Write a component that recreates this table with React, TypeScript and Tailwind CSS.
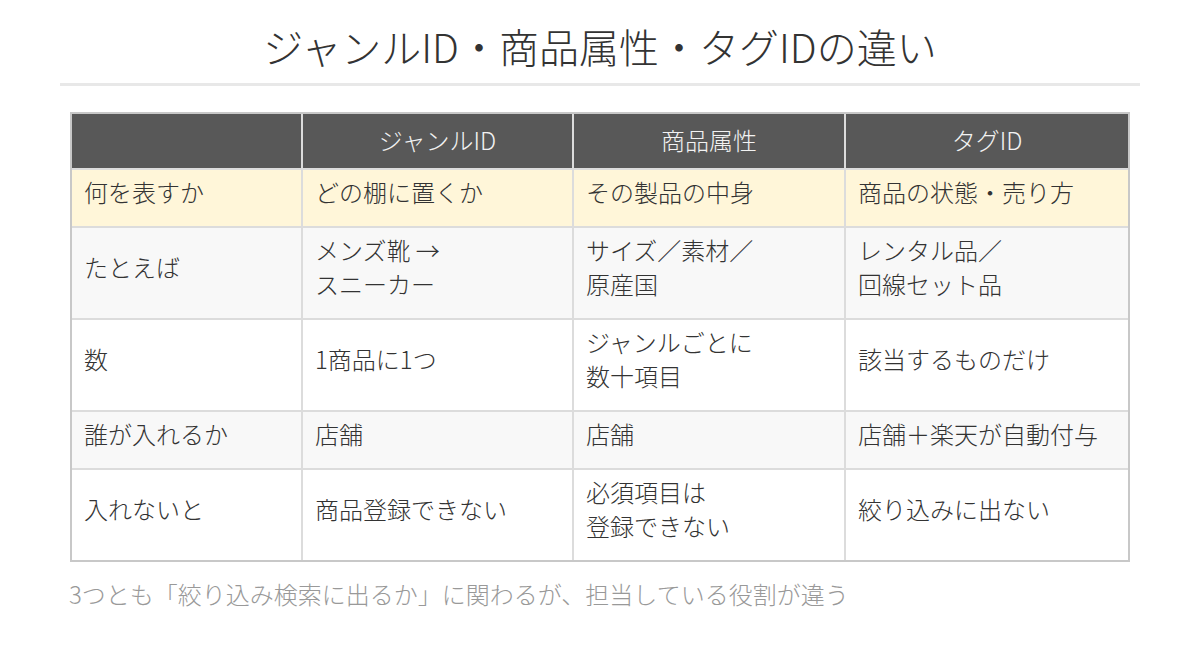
import React from "react";

const font = { fontFamily: '"Noto Sans CJK JP", "Noto Sans", sans-serif' };

const headers = ["", "ジャンルID", "商品属性", "タグID"];

type Row = { bg: string; cells: string[][] };

const rows: Row[] = [
  { bg: "bg-[#fff6d9]", cells: [["何を表すか"], ["どの棚に置くか"], ["その製品の中身"], ["商品の状態・売り方"]] },
  { bg: "bg-[#f8f8f8]", cells: [["たとえば"], ["メンズ靴 →", "スニーカー"], ["サイズ／素材／", "原産国"], ["レンタル品／", "回線セット品"]] },
  { bg: "bg-white", cells: [["数"], ["1商品に1つ"], ["ジャンルごとに", "数十項目"], ["該当するものだけ"]] },
  { bg: "bg-[#f8f8f8]", cells: [["誰が入れるか"], ["店舗"], ["店舗"], ["店舗＋楽天が自動付与"]] },
  { bg: "bg-white", cells: [["入れないと"], ["商品登録できない"], ["必須項目は", "登録できない"], ["絞り込みに出ない"]] },
];

export default function App() {
  return (
    <div className="w-[1200px] h-[652px] bg-white text-[#333] font-light" style={font}>
      <div className="pt-[22px] text-center text-[40px] leading-[48px] text-[#333] font-light">
        ジャンルID・商品属性・タグIDの違い
      </div>
      <div className="mx-[60px] mt-[13px] h-[3px] bg-[#e8e8e8]" />
      <div className="mx-[70px] mt-[26px] border-2 border-[#c8c8c8] bg-[#dcdcdc]">
        <div className="grid grid-cols-[229px_269px_270px_282px] gap-[2px]">
          {headers.map((h, i) => (
            <div
              key={i}
              className="bg-[#585858] text-[#f2f2f2] text-center text-[24px] leading-[34px] pt-[9px] pb-[11px]"
            >
              {h || "\u00a0"}
            </div>
          ))}
          {rows.map((r, ri) =>
            r.cells.map((c, ci) => (
              <div
                key={`${ri}-${ci}`}
                className={`${r.bg} flex flex-col justify-center pl-[12px] pr-[12px] pt-[5px] pb-[17px] text-[24px] leading-[34px] text-[#333]`}
              >
                {c.map((line, li) => (
                  <div key={li}>{line}</div>
                ))}
              </div>
            ))
          )}
        </div>
      </div>
      <div className="mx-[69px] mt-[15px] text-[24px] leading-[34px] text-[#999]">
        3つとも「絞り込み検索に出るか」に関わるが、担当している役割が違う
      </div>
    </div>
  );
}
